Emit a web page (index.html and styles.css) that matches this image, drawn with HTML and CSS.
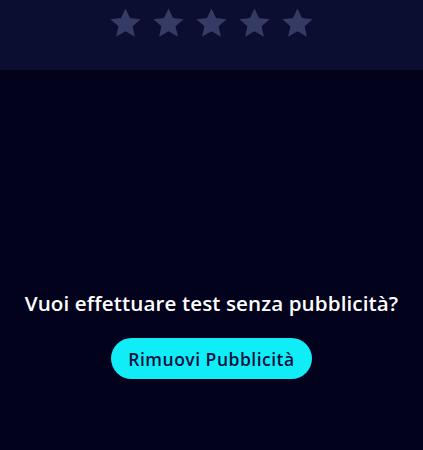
FILE: index.html
```html
<!DOCTYPE html>
<html lang="it">
<head>
    <meta charset="UTF-8">
    <meta name="viewport" content="width=device-width, initial-scale=1.0">
    <title>Test</title>
    <link rel="stylesheet" href="styles.css">
</head>
<body>
    <div class="header">
        <div class="stars">
            <svg class="star" viewBox="0 0 24 24"><path d="M12 2.2l2.9 6.3 6.9.7-5.2 4.6 1.5 6.8L12 17.1l-6.1 3.5 1.5-6.8-5.2-4.6 6.9-.7z"/></svg>
            <svg class="star" viewBox="0 0 24 24"><path d="M12 2.2l2.9 6.3 6.9.7-5.2 4.6 1.5 6.8L12 17.1l-6.1 3.5 1.5-6.8-5.2-4.6 6.9-.7z"/></svg>
            <svg class="star" viewBox="0 0 24 24"><path d="M12 2.2l2.9 6.3 6.9.7-5.2 4.6 1.5 6.8L12 17.1l-6.1 3.5 1.5-6.8-5.2-4.6 6.9-.7z"/></svg>
            <svg class="star" viewBox="0 0 24 24"><path d="M12 2.2l2.9 6.3 6.9.7-5.2 4.6 1.5 6.8L12 17.1l-6.1 3.5 1.5-6.8-5.2-4.6 6.9-.7z"/></svg>
            <svg class="star" viewBox="0 0 24 24"><path d="M12 2.2l2.9 6.3 6.9.7-5.2 4.6 1.5 6.8L12 17.1l-6.1 3.5 1.5-6.8-5.2-4.6 6.9-.7z"/></svg>
        </div>
    </div>
    <div class="content">
        <p class="question">Vuoi effettuare test senza pubblicità?</p>
        <button class="remove-ads">Rimuovi Pubblicità</button>
    </div>
</body>
</html>
```

FILE: styles.css
```css
body {
    margin: 0;
    height: 450px;
    overflow: hidden;
    background: #02021c;
    font-family: 'Open Sans', Arial, sans-serif;
    color: #fff;
}
.header {
    height: 70px;
    background: #0b0d31;
    display: flex;
    justify-content: center;
}
.stars {
    display: flex;
    gap: 6px;
    padding-top: 5px;
}
.star {
    width: 37px;
    height: 37px;
    fill: #363b66;
}
.content {
    display: flex;
    flex-direction: column;
    align-items: center;
    padding-top: 218px;
}
.question {
    margin: 0;
    font-size: 20.6px;
    font-weight: 600;
    line-height: 30px;
    letter-spacing: 0.1px;
}
.remove-ads {
    margin-top: 20px;
    width: 201px;
    height: 41px;
    border: none;
    border-radius: 21px;
    background: #10edf6;
    color: #0b1040;
    font-family: 'Open Sans', Arial, sans-serif;
    font-size: 17.5px;
    font-weight: 600;
    letter-spacing: 0.5px;
}
```
